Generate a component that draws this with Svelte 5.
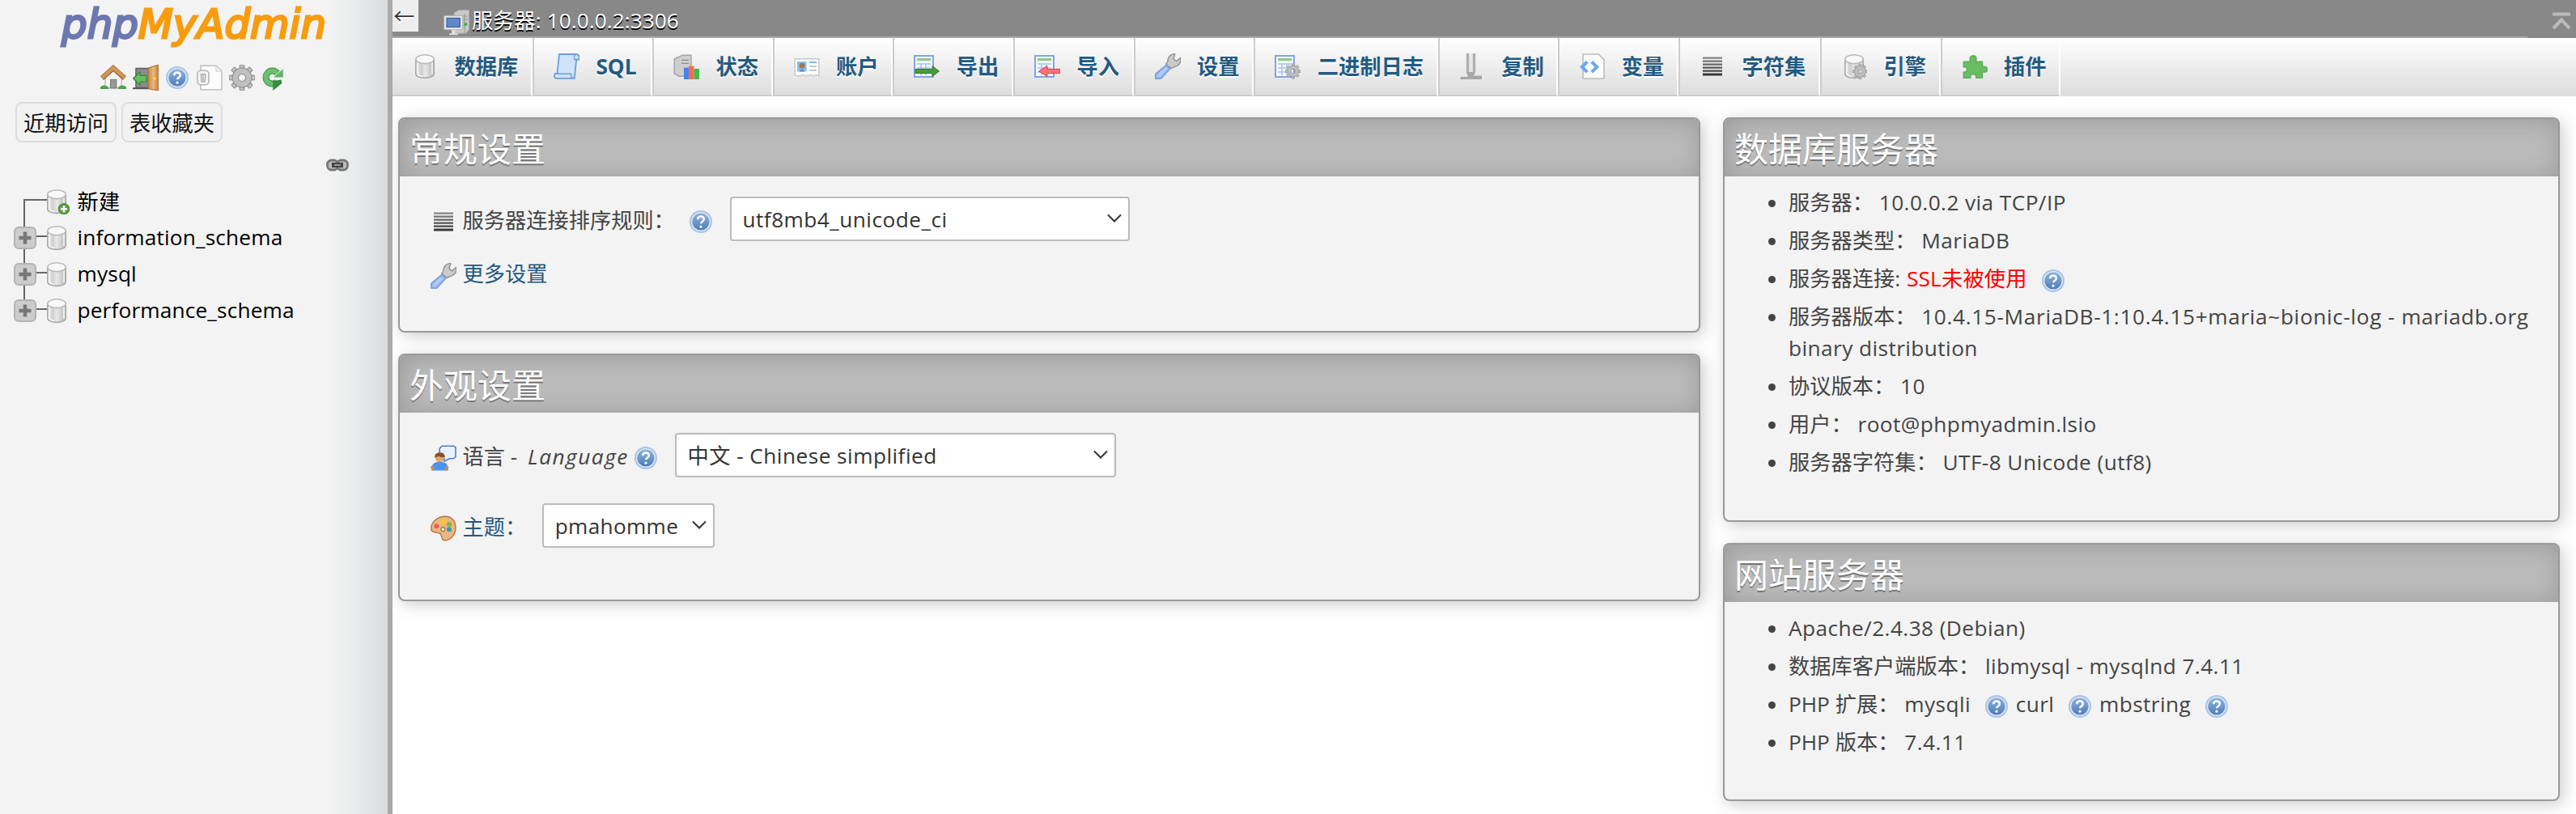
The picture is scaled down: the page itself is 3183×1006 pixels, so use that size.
<script>
  const navIcons = ['home', 'exit', 'help', 'docs', 'cog', 'reload'];

  const databases = ['information_schema', 'mysql', 'performance_schema'];

  const tabs = [
    { icon: 'db', label: '数据库' },
    { icon: 'sql', label: 'SQL' },
    { icon: 'status', label: '状态' },
    { icon: 'rights', label: '账户' },
    { icon: 'export', label: '导出' },
    { icon: 'import', label: '导入' },
    { icon: 'wrench', label: '设置' },
    { icon: 'binlog', label: '二进制日志' },
    { icon: 'replication', label: '复制' },
    { icon: 'vars', label: '变量' },
    { icon: 'charset', label: '字符集' },
    { icon: 'engine', label: '引擎' },
    { icon: 'plugin', label: '插件' }
  ];

  const extensions = ['mysqli', 'curl', 'mbstring'];

  let collation = $state('utf8mb4_unicode_ci');
  let language = $state('中文 - Chinese simplified');
  let theme = $state('pmahomme');

  const teeth = [0, 45, 90, 135, 180, 225, 270, 315];
</script>

{#snippet cylinder()}
  <path d="M2.4 4v8.6c0 1.4 2.3 2.6 5.6 2.6s5.6-1.2 5.6-2.6V4z" fill="url(#g-db)" stroke="#a9a9a9" stroke-width=".8" />
  <path d="M3.5 5.500v7.500c.8.7 2 1.100 3.200 1.300M12.500 5.500v7.500" fill="none" stroke="#f6f6f6" stroke-width=".8" />
  <ellipse cx="8" cy="3.6" rx="5.6" ry="2.7" fill="#f8f8f8" stroke="#bababa" stroke-width=".8" />
{/snippet}

{#snippet gear(cx, cy, s)}
  <g transform="translate({cx} {cy}) scale({s})">
    {#each teeth as angle}
      <rect x="-1.4" y="-7.9" width="2.8" height="4" rx=".4" fill="url(#g-cog)" stroke="#808080" stroke-width=".5" transform="rotate({angle})" />
    {/each}
    <circle r="4.1" fill="none" stroke="#8f8f8f" stroke-width="4.2" />
    <circle r="4.1" fill="none" stroke="#bfbfbf" stroke-width="3.2" />
  </g>
{/snippet}

{#snippet sheet()}
  <rect x=".5" y="1.5" width="11.5" height="13" fill="#f4f8fe" stroke="#7fa6df" stroke-width="1" />
  <rect x="2" y="3" width="8.6" height="1.6" fill="#8fc98a" />
  <path d="M2 6.5h8.6M2 9h8.6M2 11.5h8.6M4.5 6v7.5M7.5 6v7.5" stroke="#a9c3e8" stroke-width=".8" />
{/snippet}

{#snippet icon(name)}
  <svg class="icon" viewBox="0 0 16 16">
    {#if name === 'home'}
      <path d="M3 8l5-4.6L13 8v6.3H3z" fill="#f4f4f4" stroke="#aaa" stroke-width=".5" />
      <rect x="6.3" y="9.2" width="3.6" height="5.3" fill="#999" stroke="#6e6e6e" stroke-width=".5" />
      <path d="M0 15v-1.2q2-2 4.5-.4l.8 1.6zM16 15v-1.2q-2-2-4.5-.4l-.8 1.6z" fill="#4ca351" />
      <path d="M1 8.3L8 2.1l7 6.2" fill="none" stroke="#9a6330" stroke-width="3.1" />
      <path d="M1 8.1L8 1.9l7 6.2" fill="none" stroke="#cf9657" stroke-width="2.2" />
    {:else if name === 'exit'}
      <path d="M2 2.3h8v12H2z" fill="#8c8c8c" stroke="#636363" stroke-width=".8" />
      <path d="M0 14.6h10" stroke="#555" stroke-width="1" />
      <path d="M9.5 2L16 0v16l-6.500-1.200z" fill="url(#g-door)" stroke="#a8682c" stroke-width=".5" />
      <circle cx="13.4" cy="8.5" r=".9" fill="#ffd83c" />
      <path d="M.3 8.500l4.200-4v2.200h4v3.800h-4v2.200z" fill="#68bd5c" stroke="#338538" stroke-width=".6" />
    {:else if name === 'help'}
      <circle cx="8" cy="8" r="7" fill="#a9c4e4" />
      <circle cx="8" cy="8" r="6" fill="#dce8f6" />
      <circle cx="8" cy="8" r="5.300" fill="url(#g-help)" />
      <path d="M6.100 6.600q0-1.800 1.900-1.800t1.900 1.600q0 .9-1 1.500-.8.500-.8 1.200" fill="none" stroke="#f3f8fd" stroke-width="1.300" />
      <circle cx="8" cy="11.100" r=".8" fill="#f3f8fd" />
    {:else if name === 'docs'}
      <path d="M2.500.6h9.700l3.300 3.300v11.500h-13z" fill="#fdfdfd" stroke="#c0c0c0" stroke-width=".8" />
      <path d="M12 .6v3.500h3.500" fill="#eee" stroke="#d5d5d5" stroke-width=".6" />
      <rect x=".5" y="3.600" width="7" height="8.800" rx="2" fill="#f5f5f5" stroke="#b5b5b5" stroke-width=".8" />
      <path d="M2.700 6l.3 4.500h2L5.500 6M4 6v4M2.400 5.800h3.200" fill="none" stroke="#aaa" stroke-width=".7" />
    {:else if name === 'cog'}
      {@render gear(8, 8, 1)}
    {:else if name === 'reload'}
      <path d="M10.300 10.400A4 4 0 1 1 10.300 5.200" fill="none" stroke="#3e9145" stroke-width="4" />
      <path d="M8 7.700h5.900V2.600z" fill="#61b564" />
      <path d="M10.100 10.500A4 4 0 1 1 10.300 5.200" fill="none" stroke="#6dbf70" stroke-width="3" />
      <path d="M7.600 16v-5.500l-1.400-.2 6.600-1.100.4 2.300z" fill="#398b40" />
    {:else if name === 'db'}
      {@render cylinder()}
    {:else if name === 'newdb'}
      {@render cylinder()}
      <circle cx="12.500" cy="12.600" r="3.400" fill="#5c9e3c" stroke="#447b2d" stroke-width=".4" />
      <path d="M12.500 10.600v4M10.500 12.600h4" stroke="#fff" stroke-width="1.300" />
    {:else if name === 'server'}
      <path d="M6.500 2l3-1.700h6.300v12l-2 2.300H6.500z" fill="#c9c9c9" stroke="#aaa" stroke-width=".5" />
      <path d="M13 2.500v12M9 4h6M9 6h6" stroke="#999" stroke-width=".6" />
      <rect x=".3" y="3.600" width="11.600" height="8.800" rx=".7" fill="#e3e3e3" stroke="#aaa" stroke-width=".5" />
      <rect x="2" y="5.200" width="8.200" height="5.500" fill="#5f88c8" stroke="#3d64a5" stroke-width=".6" />
      <path d="M5 12.400h2.300v2.200H9v1H3.500v-1H5z" fill="#ddd" />
      <circle cx="13.700" cy="9" r="1" fill="#36b137" />
    {:else if name === 'sql'}
      <path d="M3.500.5h10.300q2 0 2 1.800v1.500h-1.700L12.900 15.400H1.500q-1-.2-1-1.600l.3-1.200h1.400z" fill="#cfe3fa" stroke="#6c9fda" stroke-width=".9" />
      <path d="M1 12.600h9.800q-.2 2.500 1.500 2.700M13.800.6q-1.300.7-.9 3.200h2.400" fill="none" stroke="#6d9dd6" stroke-width=".7" />
    {:else if name === 'status'}
      <path d="M.6 3.500l5-2.400H11v13H3.500L.6 12.500z" fill="#cfcfcf" stroke="#a4a4a4" stroke-width=".7" />
      <path d="M5 4.200h4.500M5 6.200h4.500" stroke="#8d8d8d" stroke-width=".7" />
      <path d="M6.500 8.800H10V16H6.500z" fill="#4486ee" />
      <path d="M9.500 7.800h3.300V16H9.500z" fill="#fa6a50" />
      <path d="M12.800 9.500H16V16h-3.200z" fill="#43b944" />
    {:else if name === 'rights'}
      <path d="M.6 3.400h14.800v10.400l-1.500-.6-1.500.8-2.400-.8-2.400.8-2.300-.8-2.400.8-2.300-.4z" fill="#fff" stroke="#c6c6c6" stroke-width=".7" />
      <rect x="2" y="5" width="5.800" height="6.200" fill="#85bdf3" />
      <circle cx="5" cy="7.600" r="1.700" fill="#ad7544" />
      <path d="M3.300 11.200q1.700-3 3.400 0z" fill="#4f86c8" />
      <path d="M9.500 5.500H14" stroke="#7fb5ee" stroke-width="1" />
      <path d="M9.500 8H14M9.500 10.500H14" stroke="#c4c9cf" stroke-width="1" />
    {:else if name === 'export'}
      {@render sheet()}
      <path d="M1 9.700h10.500V7.800l4.200 3.200-4.200 3.200v-1.900H1z" fill="#4a9a40" stroke="#2c7329" stroke-width=".5" />
    {:else if name === 'import'}
      {@render sheet()}
      <path d="M15.900 9.700H8V7.800L2.800 11 8 14.200v-1.900h7.900z" fill="#fa7377" stroke="#e5383c" stroke-width=".5" />
    {:else if name === 'wrench'}
      <path d="M8.200 7.800L6.900 6.500q.7-.6 1-1.800Q8.400.6 12.400.2L11.500 3.400l1.700 1.500 2.600-2.200q.6 3.600-2.200 5-2 .7-3.200 1.500z" fill="#cbcbcb" stroke="#8e8e8e" stroke-width=".7" />
      <path d="M7 7.300l2.300 2.200-5.600 6H.5v-2.800z" fill="#a3c1f1" stroke="#7ea3e0" stroke-width="1" stroke-linejoin="round" />
      <path d="M7 9l-4.700 4.900" stroke="#b4ccf5" stroke-width="1.200" />
    {:else if name === 'binlog'}
      {@render sheet()}
      {@render gear(11.4, 11, 0.58)}
    {:else if name === 'replication'}
      <path d="M4.400 0h1.600v11.500H4.400zM8.400 0h1.700v11.500H8.400z" fill="#b0b0b0" />
      <path d="M6 0h1v11.500H6zM7.600 0h.8v11.500h-.8z" fill="#dedede" />
      <path d="M4.400 11.500h5.700l-1.200 2.200H14V16H.8v-1.500h4.700z" fill="#a6a6a6" />
    {:else if name === 'vars'}
      <path d="M2.500.5h9.600l3.400 3.400v11.600h-13z" fill="#fbfbfb" stroke="#bcbcbc" stroke-width=".8" />
      <path d="M5.100 5.200L1.900 8.400l3.200 3.200M7.900 5.200l3.200 3.200-3.200 3.200" fill="none" stroke="#66a8f2" stroke-width="2" />
    {:else if name === 'charset'}
      <path d="M2 2.300h12v1.100H2zM2 4.300h12v1.100H2zM2 6.300h12v1.100H2zM2 8.300h12v1.100H2zM2 10.300h12v1.100H2zM2 12.300h12v1.500H2z" fill="url(#g-lines)" />
    {:else if name === 'engine'}
      {@render cylinder()}
      {@render gear(11.700, 11.200, 0.58)}
    {:else if name === 'plugin'}
      <path d="M1.200 5.100h4.200Q4.400 1.500 7 1.400T8.700 5.100h4v3.300q3-.8 3 1.500t-3 1.500v3.700H9q0-2.400-1.900-2.400t-1.800 2.400H1.200v-3.600q2.200.1 2.200-1.600T1.200 8.300z" fill="#69bd63" stroke="#5fae5b" stroke-width=".8" />
    {:else if name === 'lang'}
      <path d="M7 .6h7.500l1 1v5.600L14.300 8.400h-2.600L8.500 10V8.200L5.600 6V2.200z" fill="#e7f1fd" stroke="#4b83cc" stroke-width=".8" />
      <circle cx="5.700" cy="7.900" r="2.800" fill="#dfa56d" />
      <path d="M2.500 7.700q0-3.100 3.200-3.100T8.900 7.500Q6 7.800 4.700 6.700q-.7.900-2.200 1z" fill="#875125" />
      <path d="M.5 15.800q0-5 3.500-5.300h3.500q3.500.3 3.500 5.300z" fill="#4b93f0" />
      <path d="M.3 13.200l1.900 2.300M10.800 13.200L9 15.500" stroke="#cf8d4e" stroke-width="1.500" />
    {:else if name === 'palette'}
      <path d="M9 .6c4.200 0 6.700 3 6.500 7.500-.2 3.800-3 7.300-6.700 7.300-2.600 0-1.200-2.800-2.900-4.200C4.300 10 .3 11 .3 8.200.3 3.800 4.700.6 9 .6z" fill="#e8b784" stroke="#b7763b" stroke-width=".7" />
      <circle cx="3.700" cy="6.600" r="1.500" fill="#ef5b57" />
      <circle cx="7.800" cy="3.700" r="1.800" fill="#f8c634" />
      <circle cx="11.500" cy="5.500" r="1.500" fill="#82b839" />
      <circle cx="11.500" cy="8.600" r="1.500" fill="#389dad" />
      <circle cx="7.700" cy="8.600" r="1.200" fill="#f2f2f2" stroke="#ae7542" stroke-width=".7" />
    {/if}
  </svg>
{/snippet}

{#snippet chevron()}
  <svg class="chevron" viewBox="0 0 20 12">
    <path d="M2 1.500l8 8 8-8" fill="none" stroke="#333" stroke-width="2" />
  </svg>
{/snippet}

<svg width="0" height="0" class="defs">
  <defs>
    <linearGradient id="g-db">
      <stop offset="0" stop-color="#ededed" />
      <stop offset=".3" stop-color="#cfcfcf" />
      <stop offset=".5" stop-color="#e8e8e8" />
      <stop offset="1" stop-color="#b8b8b8" />
    </linearGradient>
    <linearGradient id="g-cog" x2="0" y2="1">
      <stop offset="0" stop-color="#d0d0d0" />
      <stop offset="1" stop-color="#9a9a9a" />
    </linearGradient>
    <linearGradient id="g-door">
      <stop offset="0" stop-color="#c98746" />
      <stop offset=".5" stop-color="#e9b87c" />
      <stop offset="1" stop-color="#c17f3e" />
    </linearGradient>
    <linearGradient id="g-help" x2="0" y2="1">
      <stop offset="0" stop-color="#8fb2db" />
      <stop offset="1" stop-color="#4f7db7" />
    </linearGradient>
    <linearGradient id="g-lines" x2="0" y2="1">
      <stop offset="0" stop-color="#888" />
      <stop offset=".5" stop-color="#5c5c5c" />
      <stop offset="1" stop-color="#333" />
    </linearGradient>
  </defs>
</svg>

<div class="page" lang="zh-CN">
  <aside class="sidebar">
    <svg class="logo" viewBox="0 0 340 64">
      <text x="4" y="47" textLength="327" lengthAdjust="spacingAndGlyphs"><tspan class="php">php</tspan><tspan class="my">MyAdmin</tspan></text>
    </svg>

    <div class="nav-icons">
      {#each navIcons as name}
        {@render icon(name)}
      {/each}
    </div>

    <div class="quick">
      <button>近期访问</button>
      <button>表收藏夹</button>
    </div>

    <div class="link-row">
      <svg width="28" height="16" viewBox="0 0 28 16">
        <rect x="1.500" y="2" width="13" height="12" rx="5" fill="#bbb" stroke="#777" stroke-width="2.800" />
        <rect x="13.500" y="2" width="13" height="12" rx="5" fill="#bbb" stroke="#777" stroke-width="2.800" />
        <path d="M7 8h14" stroke="#444" stroke-width="6" />
        <path d="M10 8h8" stroke="#999" stroke-width="2" />
      </svg>
    </div>

    <ul class="tree">
      <li>
        <svg class="branch" viewBox="0 0 37 45">
          <path d="M41 21H13V45" />
        </svg>
        {@render icon('newdb')}
        <span class="new">新建</span>
      </li>
      {#each databases as name, i}
        <li>
          <svg class="branch" viewBox="0 0 37 45">
            <path d="M13 0V{i < databases.length - 1 ? 45 : 20}M26 21H41" />
            <rect x="1" y="10" width="26" height="26" rx="5" />
            <path class="plus" d="M14 15.500v15M6.500 23h15" />
          </svg>
          {@render icon('db')}
          <span>{name}</span>
        </li>
      {/each}
    </ul>
  </aside>

  <div class="resizer"></div>

  <div class="content">
    <header class="serverinfo">
      <button class="collapse">←</button>
      {@render icon('server')}
      <span class="host">服务器: 10.0.0.2:3306</span>
      <svg class="to-top" viewBox="0 0 24 22">
        <path d="M1 2.500h22M2 20L12 9.500 22 20" />
      </svg>
    </header>

    <nav class="tabs">
      {#each tabs as tab}
        <a href="#{tab.icon}" class={tab.icon}>
          {@render icon(tab.icon)}
          <span>{tab.label}</span>
        </a>
      {/each}
    </nav>

    <main>
      <div class="col main-col">
        <section class="group general">
          <h2>常规设置</h2>
          <div class="row">
            {@render icon('charset')}
            <label for="collation" class="l-collation">服务器连接排序规则：</label>
            {@render icon('help')}
            <div class="select s-collation">
              <select id="collation" bind:value={collation}>
                <option>utf8mb4_unicode_ci</option>
              </select>
              {@render chevron()}
            </div>
          </div>
          <div class="row more">
            {@render icon('wrench')}
            <a href="#prefs">更多设置</a>
          </div>
        </section>

        <section class="group appearance">
          <h2>外观设置</h2>
          <div class="row">
            {@render icon('lang')}
            <label for="lang" class="l-lang">语言 - <em>Language</em></label>
            {@render icon('help')}
            <div class="select s-lang">
              <select id="lang" bind:value={language}>
                <option>中文 - Chinese simplified</option>
              </select>
              {@render chevron()}
            </div>
          </div>
          <div class="row theme">
            {@render icon('palette')}
            <a href="#themes">主题：</a>
            <div class="select s-theme">
              <select bind:value={theme}>
                <option>pmahomme</option>
              </select>
              {@render chevron()}
            </div>
          </div>
        </section>
      </div>

      <div class="col side-col">
        <section class="group database">
          <h2>数据库服务器</h2>
          <ul class="info">
            <li>服务器： <span class="value">10.0.0.2 via TCP/IP</span></li>
            <li>服务器类型： <span class="value">MariaDB</span></li>
            <li>服务器连接: <span class="caution">SSL未被使用</span> {@render icon('help')}</li>
            <li>服务器版本： <span class="value version">10.4.15-MariaDB-1:10.4.15+maria~bionic-log - mariadb.org</span> <span class="value">binary distribution</span></li>
            <li>协议版本： <span class="value">10</span></li>
            <li>用户： <span class="value">root@phpmyadmin.lsio</span></li>
            <li>服务器字符集： <span class="value">UTF-8 Unicode (utf8)</span></li>
          </ul>
        </section>

        <section class="group web">
          <h2>网站服务器</h2>
          <ul class="info">
            <li><span class="value">Apache/2.4.38 (Debian)</span></li>
            <li>数据库客户端版本： <span class="value">libmysql - mysqlnd 7.4.11</span></li>
            <li>PHP 扩展： {#each extensions as ext}<span class="value">{ext}</span> {@render icon('help')}{' '}{/each}</li>
            <li>PHP 版本： <span class="value">7.4.11</span></li>
          </ul>
        </section>
      </div>
    </main>
  </div>
</div>

<style>
  :global(body) {
    margin: 0;
    background: #fff;
  }

  .page {
    display: flex;
    width: 3183px;
    height: 1006px;
    overflow: hidden;
    font-family: 'Open Sans', 'Noto Sans CJK SC', sans-serif;
    font-size: 26.24px;
    line-height: 39.36px;
    color: #444;
  }

  .defs {
    position: absolute;
  }

  .icon {
    width: 32px;
    height: 32px;
    flex: none;
  }

  a {
    color: #235a81;
    text-decoration: none;
  }

  button {
    font: inherit;
    padding: 0;
    cursor: pointer;
  }

  /* navigation panel */
  .sidebar {
    width: 479px;
    flex: none;
    background: linear-gradient(to right, #f3f3f3 400px, #eceeee 430px, #d8dcde 479px);
    color: #000;
  }

  .logo {
    display: block;
    width: 340px;
    height: 64px;
    margin-left: 72px;
    overflow: visible;
    font-family: 'DejaVu Sans', sans-serif;
    font-size: 49px;
    font-style: italic;
  }

  .php {
    fill: #6c78af;
    stroke: #6c78af;
    stroke-width: 2.8px;
  }

  .my {
    fill: #f89c0e;
    stroke: #f89c0e;
    stroke-width: 2.8px;
  }

  .nav-icons {
    display: flex;
    gap: 7.7px;
    padding: 16px 0 14px 124px;
  }

  .quick {
    display: flex;
    gap: 6px;
    padding-left: 19px;
  }

  .quick button {
    box-sizing: border-box;
    width: 125px;
    height: 50px;
    padding-top: 3px;
    border: 2px solid #ddd;
    border-radius: 8px;
    background: #f2f2f2;
    color: #111;
  }

  .link-row {
    display: flex;
    justify-content: flex-end;
    padding: 20px 48px 14px 0;
  }

  .tree {
    margin: 0;
    padding: 0 0 0 17px;
    list-style: none;
  }

  .tree li {
    display: flex;
    align-items: center;
    height: 45px;
  }

  .tree span {
    margin-left: 9.5px;
    letter-spacing: 0.16px;
  }

  .tree .new {
    padding-top: 2px;
  }

  .branch {
    width: 37px;
    height: 45px;
    overflow: visible;
    fill: none;
    stroke: #666;
    stroke-width: 2;
  }

  .branch rect {
    fill: #ccc;
    stroke: #b3b3b3;
  }

  .branch .plus {
    stroke: #777;
    stroke-width: 4.5;
  }

  .resizer {
    width: 6px;
    flex: none;
    background: #aaa;
  }

  /* top bar */
  .content {
    flex: 1;
    min-width: 0;
  }

  .serverinfo {
    display: flex;
    align-items: flex-start;
    height: 47px;
    box-sizing: border-box;
    background: linear-gradient(#aaa, #aaa) left bottom / 2638px 2px no-repeat #888;
  }

  .collapse {
    width: 32px;
    height: 39px;
    padding-right: 4px;
    border: 0;
    background: #eee;
    color: #333;
    font-family: 'Noto Sans CJK SC', sans-serif;
    line-height: 39px;
    text-shadow: 0 2px 0 #fff;
  }

  .serverinfo .icon {
    margin: 12px 3px 0 31px;
  }

  .host {
    margin-top: 6px;
    color: #fff;
    letter-spacing: 0.05px;
    text-shadow: 0 2px 0 #000;
  }

  .to-top {
    width: 24px;
    height: 22px;
    margin: 15px 6px 0 auto;
    fill: none;
    stroke: #bbb;
    stroke-width: 4;
  }

  .tabs {
    display: flex;
    height: 72px;
    background: linear-gradient(#fff, #dcdcdc);
  }

  .tabs a {
    display: flex;
    align-items: center;
    box-sizing: border-box;
    padding: 0 15.7px 0 24px;
    border: 0 solid #ccc;
    border-width: 0 2px 2px;
    border-right-color: #fff;
    font-weight: bold;
    white-space: nowrap;
    text-shadow: 0 2px 0 #fff;
  }

  .tabs a:first-child {
    border-left: 0;
  }

  .tabs a.sql {
    width: 148px;
  }

  .tabs span {
    margin-left: 20.5px;
    padding-top: 2px;
  }

  /* panels */
  main {
    display: flex;
    gap: 28px;
    padding: 26px 20px 0 7px;
  }

  .col {
    display: flex;
    flex-direction: column;
    gap: 26px;
  }

  .main-col {
    width: 1609px;
  }

  .side-col {
    width: 1034px;
  }

  .group {
    box-sizing: border-box;
    border: 2px solid #999;
    border-radius: 8px;
    background: #f3f3f3;
    box-shadow: 4px 4px 20px #ccc;
  }

  .general {
    height: 266px;
  }

  .appearance {
    height: 306px;
  }

  .database {
    height: 500px;
  }

  .web {
    height: 319px;
  }

  .group h2 {
    height: 71px;
    margin: 0;
    padding-left: 12px;
    border-radius: 6px 6px 0 0;
    background: #bbb;
    box-shadow: inset 2px 2px 30px #999;
    color: #fff;
    font-size: 42px;
    font-weight: normal;
    line-height: 73px;
    text-shadow: 0 2px 0 #777;
  }

  .row {
    display: flex;
    align-items: center;
    height: 55px;
    margin: 25px 0 0 38px;
  }

  .row .icon {
    margin-top: 6px;
  }

  .row label,
  .row a {
    margin-left: 7.5px;
    padding-top: 4px;
    white-space: nowrap;
  }

  .row.more {
    height: 40px;
    margin-top: 20px;
  }

  .row.more a {
    padding-top: 2px;
  }

  .row.theme {
    margin-top: 32px;
  }

  .l-collation {
    width: 278.5px;
  }

  .l-lang {
    width: 210.5px;
  }

  .l-lang em {
    margin-left: 6px;
    letter-spacing: 1.5px;
  }

  .select {
    position: relative;
    height: 55px;
    margin-left: 20px;
  }

  .select select {
    width: 100%;
    height: 100%;
    padding: 2px 0 0 13.5px;
    border: 2px solid #bbb;
    border-radius: 4px;
    appearance: none;
    background: #fff;
    color: #333;
    font: inherit;
    letter-spacing: 0.46px;
  }

  .s-collation {
    width: 494px;
  }

  .s-lang {
    width: 545px;
  }

  .s-theme {
    width: 213px;
  }

  .s-theme select {
    letter-spacing: 0.3px;
  }

  .chevron {
    position: absolute;
    right: 9px;
    top: 21px;
    width: 20px;
    height: 12px;
    pointer-events: none;
  }

  .info {
    margin: 0;
    padding: 13px 26px 0 79px;
  }

  .info li {
    margin-bottom: 7.6px;
  }

  .info .icon {
    margin: -6px 0 -6px 9px;
    vertical-align: -3px;
  }

  .value {
    margin-left: 3px;
    letter-spacing: 0.42px;
  }

  .value.version {
    letter-spacing: 0.64px;
  }

  /* text that starts its own line */
  li > .value:first-child,
  .version + .value {
    margin-left: 0;
  }

  .icon + .value {
    margin-left: 1px;
  }

  .caution {
    margin-left: 1px;
    letter-spacing: 0.2px;
    color: #f00;
  }
</style>
